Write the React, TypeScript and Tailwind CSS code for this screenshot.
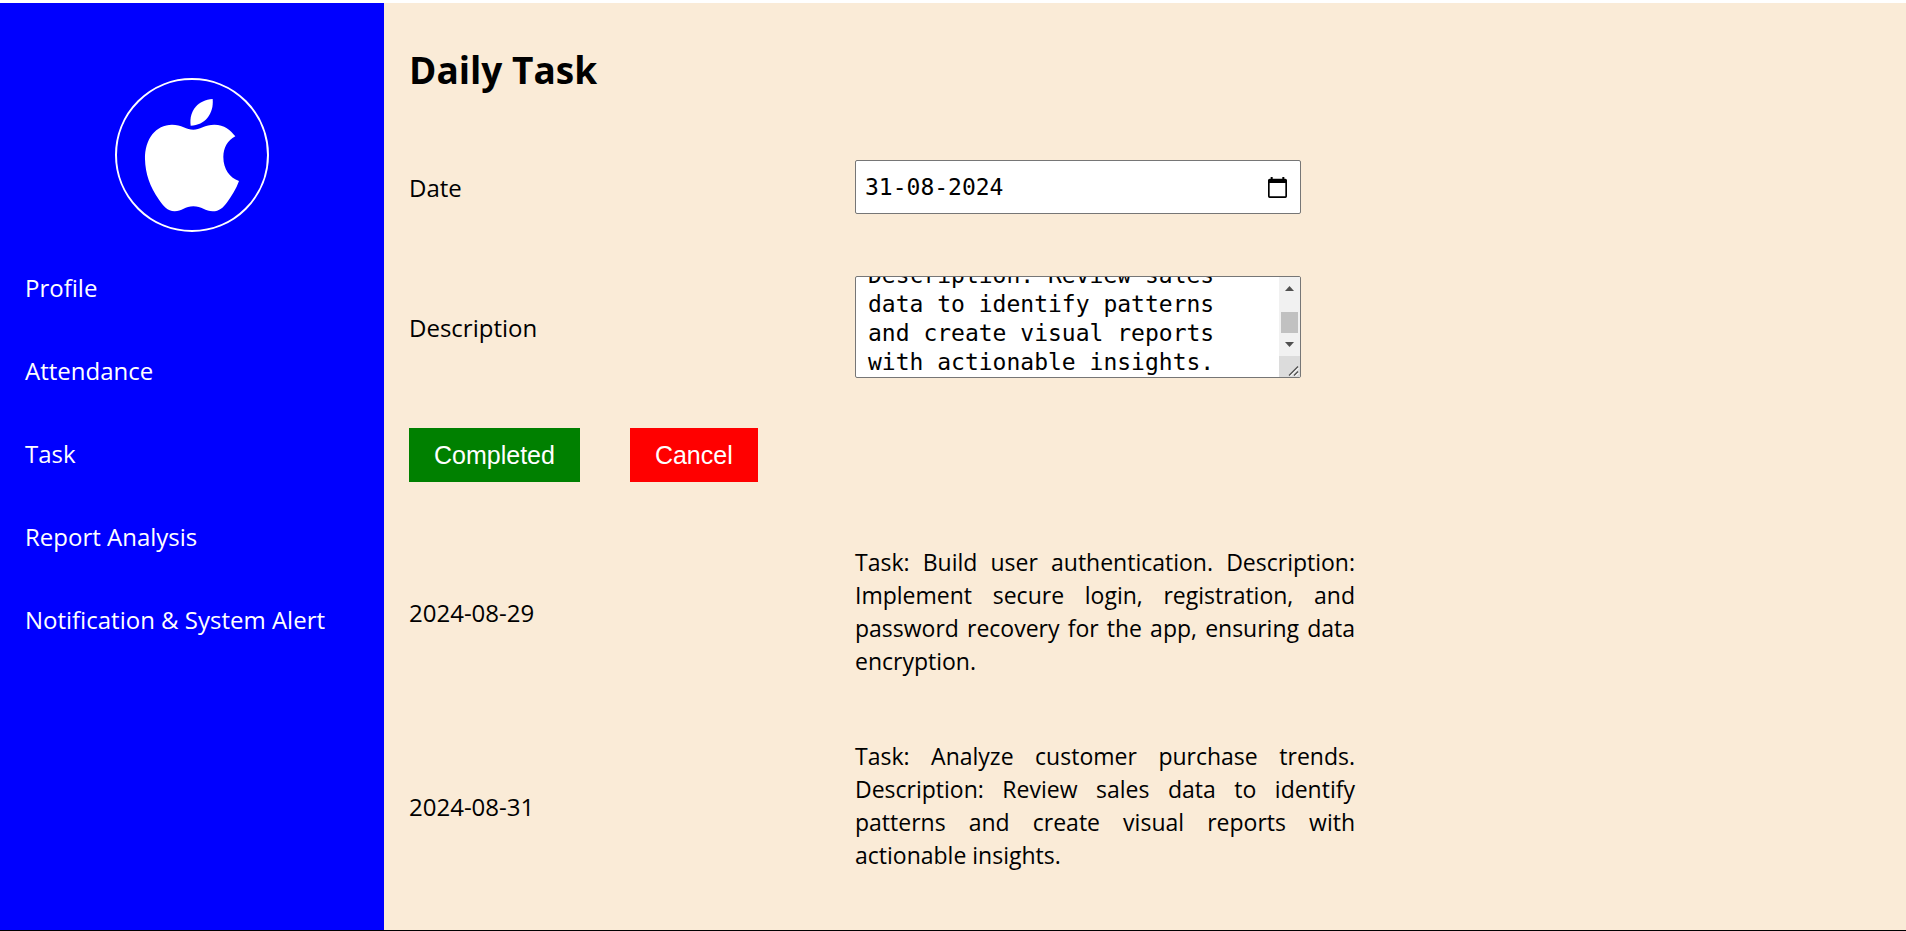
import { useLayoutEffect, useRef, useState } from "react";

const navItems = ["Profile", "Attendance", "Task", "Report Analysis", "Notification & System Alert"];

const tasks = [
  {
    date: "2024-08-29",
    text: "Task: Build user authentication. Description: Implement secure login, registration, and password recovery for the app, ensuring data encryption.",
  },
  {
    date: "2024-08-31",
    text: "Task: Analyze customer purchase trends. Description: Review sales data to identify patterns and create visual reports with actionable insights.",
  },
];

function Logo() {
  return (
    <svg viewBox="0 0 462 462" className="mx-auto size-[154px]" role="img" aria-label="Apple">
      <circle cx="231" cy="231" r="228" fill="none" stroke="white" strokeWidth="6" />
      <g fill="white" transform="translate(-15 -18)">
        <path d="M308 81C312 125 285 160 242 161C236 115 265 84 308 81Z" />
        <path d="M250 173C268 173 286 158 313 158C343 158 362 175 376 193C352 205 340 228 340 255C340 292 360 318 387 327C378 352 365 372 352 390C340 407 328 418 308 418C287 418 274 403 250 403C226 403 215 418 194 418C172 418 160 402 146 382C120 345 106 305 105 262C104 200 138 158 186 158C214 158 230 173 250 173Z" />
      </g>
    </svg>
  );
}

function Sidebar() {
  return (
    <aside className="w-96 shrink-0 bg-[#0000ff] pt-[75px] text-white">
      <Logo />
      <nav className="mt-[39px] flex flex-col gap-[50px] px-[25px]">
        {navItems.map((item) => (
          <a key={item} href="#" className="whitespace-nowrap">
            {item}
          </a>
        ))}
      </nav>
    </aside>
  );
}

function CalendarIcon() {
  return (
    <svg viewBox="0 0 57 63" className="h-[21px] w-[19px]" aria-hidden="true">
      <path
        fill="currentColor"
        fillRule="evenodd"
        d="M8 0h6v5h29V0h6v5h3a5 5 0 0 1 5 5v48a5 5 0 0 1-5 5H5a5 5 0 0 1-5-5V10a5 5 0 0 1 5-5h3zM5 18v40h47V18z"
      />
    </svg>
  );
}

function ScrollBar() {
  return (
    <div className="flex w-[21px] shrink-0 flex-col items-center bg-[#f1f1f1]" aria-hidden="true">
      <svg viewBox="0 0 21 21" className="size-[21px]">
        <path d="M6 14L10.500 9L15 14Z" fill="#505050" />
      </svg>
      <div className="mt-3.5 mb-0.5 h-[21px] w-[17px] bg-[#c1c1c1]" />
      <svg viewBox="0 0 21 21" className="size-[21px]">
        <path d="M6 7L10.500 12L15 7Z" fill="#505050" />
      </svg>
      <svg viewBox="0 0 21 21" className="size-[21px] bg-[#dcdcdc]">
        <path d="M10 19.500L19 10.500M15 19.500L19 15.500" stroke="#505050" strokeWidth="1.300" />
        <path d="M11.500 20L19.500 12M16.500 20L19.500 17" stroke="white" strokeWidth="1" />
      </svg>
    </div>
  );
}

function TaskForm() {
  const [date, setDate] = useState("31-08-2024");
  const [description, setDescription] = useState(tasks[1].text);
  const area = useRef<HTMLTextAreaElement>(null);

  useLayoutEffect(() => {
    if (area.current) area.current.scrollTop = area.current.scrollHeight;
  }, []);

  return (
    <form onSubmit={(e) => e.preventDefault()}>
      <div className="grid grid-cols-[446px_446px] items-center gap-y-[62px]">
        <label htmlFor="date">Date</label>
        <div className="flex h-[54px] items-center rounded-xs border border-[#767676] bg-white pr-[13px] pl-[9px]">
          <input
            id="date"
            type="text"
            value={date}
            onChange={(e) => setDate(e.target.value)}
            className="min-w-0 flex-1 font-['DejaVu_Sans_Mono',monospace] text-[23px] outline-none"
          />
          <button type="button" aria-label="Choose date">
            <CalendarIcon />
          </button>
        </div>
        <label htmlFor="description">Description</label>
        <div className="flex h-[102px] overflow-hidden rounded-xs border border-[#767676] bg-white">
          <textarea
            id="description"
            ref={area}
            value={description}
            onChange={(e) => setDescription(e.target.value)}
            className="block min-w-0 flex-1 resize-none px-3 pt-3 font-['DejaVu_Sans_Mono',monospace] text-[23px] leading-[29px] outline-none"
          />
          <ScrollBar />
        </div>
      </div>
      <div className="mt-[50px] flex gap-[50px] font-['Liberation_Sans',sans-serif] text-[25px]">
        <button type="submit" className="h-[54px] bg-[#008000] px-[25px] text-white">
          Completed
        </button>
        <button type="reset" className="h-[54px] bg-[#ff0000] px-[25px] text-white">
          Cancel
        </button>
      </div>
    </form>
  );
}

export default function App() {
  return (
    <div className="flex min-h-screen border-t-3 border-b border-t-white border-b-black bg-[#faebd7] font-['Open_Sans',sans-serif] text-2xl leading-[33px] text-black">
      <Sidebar />
      <main className="flex-1 px-[25px] pt-10">
        <h1 className="mb-[63px] text-[37px] leading-[54px] font-bold">Daily Task</h1>
        <TaskForm />
        <ul className="mt-16 flex flex-col gap-[62px]">
          {tasks.map((task) => (
            <li key={task.date} className="grid grid-cols-[446px_500px] items-center">
              <time dateTime={task.date}>{task.date}</time>
              <p className="text-justify text-[23px]">{task.text}</p>
            </li>
          ))}
        </ul>
      </main>
    </div>
  );
}
